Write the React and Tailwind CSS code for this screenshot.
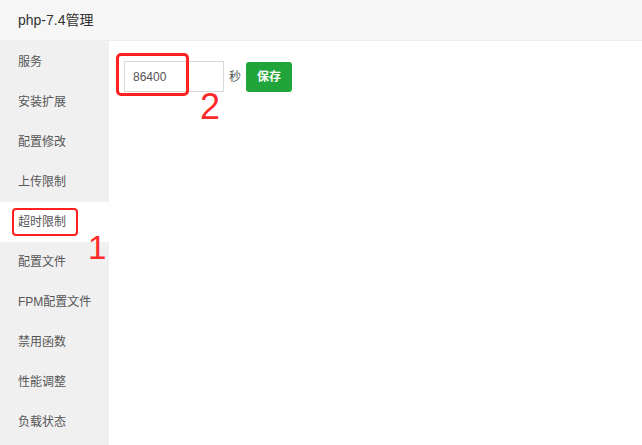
import React from 'react';

const menu = ['服务', '安装扩展', '配置修改', '上传限制', '超时限制', '配置文件', 'FPM配置文件', '禁用函数', '性能调整', '负载状态'];

const App = () => {
  const active = '超时限制';
  return (
    <div className="w-[642px] h-[445px] bg-white overflow-hidden text-[#333]" style={{ fontFamily: '"Microsoft YaHei", "Liberation Sans", "Noto Sans CJK SC", sans-serif' }}>
      <div className="h-[41px] bg-[#f6f6f6] border-b border-[#eeeeee] flex items-center pl-[18px] text-[14px] text-[#333]">
        php-7.4管理
      </div>
      <div className="flex h-[404px]">
        <div className="w-[109px] bg-[#f0f0f0] flex flex-col shrink-0 pt-[1px]">
          {menu.map(item => (
            <div
              key={item}
              className={`relative h-[40px] flex items-center pl-[18px] text-[12px] text-[#555] ${item === active ? 'bg-white' : ''}`}
            >
              {item}
              {item === active && (
                <>
                  <div className="absolute left-[12px] top-[6px] w-[66px] h-[28px] border-2 border-[#ff2020] rounded-[4px]" />
                  <div className="absolute left-[88px] top-[29px] text-[33px] leading-none text-[#ff2a2a]">1</div>
                </>
              )}
            </div>
          ))}
        </div>
        <div className="flex-1 pt-[20px] pl-[15px]">
          <div className="flex items-center">
            <div className="relative">
              <input
                readOnly
                value="86400"
                className="w-[100px] h-[31px] border border-[#d8d8d8] pl-[8px] text-[12px] text-[#555] outline-none"
              />
              <div className="absolute left-[-8px] top-[-8px] w-[73px] h-[43px] border-[3px] border-[#ff2020] rounded-[5px]" />
              <div className="absolute left-[76px] top-[28px] text-[36px] leading-none text-[#ff2a2a]">2</div>
            </div>
            <span className="ml-[5px] text-[12px] text-[#555]">秒</span>
            <button className="ml-[5px] h-[30px] w-[46px] rounded-[3px] bg-[#20a53a] text-white text-[12px] font-bold">
              保存
            </button>
          </div>
        </div>
      </div>
    </div>
  );
};

export default App;
